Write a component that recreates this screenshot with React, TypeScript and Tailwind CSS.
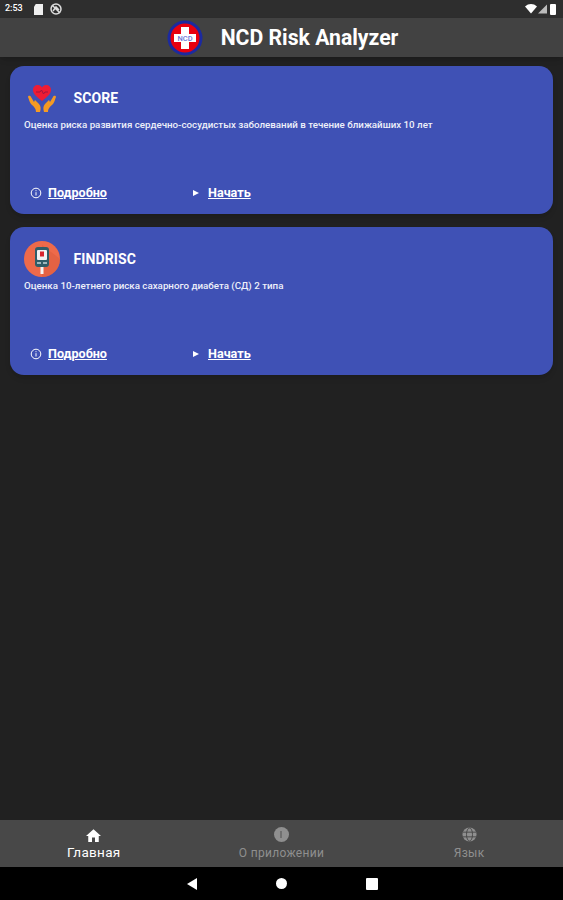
const font = "font-['Roboto',sans-serif]";

function LogoIcon() {
  return (
    <svg viewBox="0 0 36 36" className="w-[36px] h-[36px]">
      <circle cx="18" cy="18" r="16" fill="#e8000f" stroke="#1c2aa0" strokeWidth="3" />
      <path d="M14 7h8v7h7v8h-7v7h-8v-7H7v-8h7z" fill="#fff" />
      <text x="18" y="20.500" textAnchor="middle" fontSize="7.500" fontWeight="500" fill="#6a78d8" fontFamily="Roboto">
        NCD
      </text>
    </svg>
  );
}

function HeartHands() {
  return (
    <svg viewBox="0 0 30 30" className="w-[30px] h-[30px]">
      <path d="M15 18C10 14 6 11 6 7c0-3 2-5 5-5 2 0 3 1 4 2.500C16 3 17 2 19 2c3 0 5 2 5 5 0 4-4 7-9 11z" fill="#ee1c34" />
      <path d="M9 9h4l1.500-2 2 4 1.500-2h3" fill="none" stroke="#a01540" strokeWidth="1" />
      <path d="M1 14c1 2 1 4 3 7 2 2 5 4 5 8h4c1-3 1-6-1-8l-4-4-1 2-3-5c-1-2-3-1-3 0z" fill="#f59a23" />
      <path d="M29 14c-1 2-1 4-3 7-2 2-5 4-5 8h-4c-1-3-1-6 1-8l4-4 1 2 3-5c1-2 3-1 3 0z" fill="#f59a23" />
    </svg>
  );
}

function Glucometer() {
  return (
    <svg viewBox="0 0 36 36" className="w-[36px] h-[36px]">
      <circle cx="18" cy="18" r="18" fill="#ee6a4a" />
      <path d="M18 4L36 18A18 18 0 0 1 18 36z" fill="#d95a3c" opacity="0.5" />
      <rect x="11" y="6" width="14" height="20" rx="3" fill="#2f5d68" />
      <rect x="13" y="9" width="10" height="10" rx="1" fill="#f2f2f2" />
      <rect x="16" y="10.500" width="4" height="5" fill="#d8242c" />
      <rect x="13" y="21" width="4" height="2" fill="#9fb8bd" />
      <rect x="19" y="21" width="4" height="2" fill="#9fb8bd" />
      <rect x="16.500" y="26" width="3" height="7" fill="#f4f4f4" />
    </svg>
  );
}

function InfoMark() {
  return (
    <svg viewBox="0 0 12 12" className="w-[12px] h-[12px]" fill="none" stroke="#fff" strokeWidth="1">
      <circle cx="6" cy="6" r="4.800" />
      <path d="M6 5.200v3.300M6 3.200v1" />
    </svg>
  );
}

function Card({ icon, title, text }: { icon: React.ReactNode; title: string; text: string }) {
  return (
    <div className="h-[148px] rounded-[14px] bg-[#3f51b5] flex flex-col pl-[14px] pt-[14px] text-white shadow-md">
      <div className="flex items-center h-[36px]">
        <div className="w-[36px] h-[36px] flex items-center justify-center">{icon}</div>
        <span className="ml-[13.500px] text-[14px] leading-none font-bold tracking-[0.1px]">{title}</span>
      </div>
      <p className="text-[9.75px] leading-[12px] font-medium mt-[3px] text-[#eef0fa]">{text}</p>
      <div className="mt-auto mb-[14.500px] flex items-center text-[12.6px] font-bold leading-none">
        <div className="flex items-center w-[169px] pl-[6px]">
          <InfoMark />
          <span className="ml-[6px] underline">Подробно</span>
        </div>
        <div className="w-0 h-0 border-y-[3.5px] border-y-transparent border-l-[6px] border-l-white" />
        <span className="ml-[9px] underline">Начать</span>
      </div>
    </div>
  );
}

function Tab({ icon, label, active }: { icon: React.ReactNode; label: string; active?: boolean }) {
  return (
    <div className={`flex flex-col items-center ${active ? "text-white" : "text-[#8f8f8f]"}`}>
      <div className="h-[16px] flex items-center justify-center">{icon}</div>
      <span className={`leading-[16px] ${active ? "mt-[1px] text-[13.5px]" : "mt-[2px] text-[12px]"} tracking-[0.3px]`}>{label}</span>
    </div>
  );
}

export default function App() {
  return (
    <div className={`${font} w-[563px] h-[900px] flex flex-col bg-[#212121] overflow-hidden`}>
      {/* статус-бар */}
      <div className="h-[18px] bg-[#2e2e2e] flex items-center pl-[5px] pr-[6px] text-white shrink-0">
        <span className="text-[9px] font-medium w-[23px]">2:53</span>
        <svg viewBox="0 0 10 12" className="w-[9px] h-[11px] ml-[6px]" fill="#eee">
          <path d="M2 0h8v12H0V3z" />
        </svg>
        <svg viewBox="0 0 12 12" className="w-[12px] h-[12px] ml-[7px]" fill="none" stroke="#ddd" strokeWidth="1.500">
          <circle cx="6" cy="6" r="5" />
          <path d="M2 2l8 8M3 8l3-4 3 3" />
        </svg>
        <div className="ml-auto flex items-center gap-[1px]">
          <svg viewBox="0 0 12 10" className="w-[12px] h-[10px]" fill="#fff">
            <path d="M0 2.500C3.500-.8 8.500-.8 12 2.500L6 9.500z" />
          </svg>
          <svg viewBox="0 0 10 10" className="w-[9px] h-[10px]" fill="#bbb">
            <path d="M10 0v10H0z" />
          </svg>
          <div className="w-[6px] h-[11px] bg-white rounded-[1px] ml-[2px] mr-[1px]" />
        </div>
      </div>

      {/* шапка */}
      <div className="h-[39px] bg-[#424242] flex items-center justify-center pl-[2px] shrink-0 shadow-md">
        <div className="flex items-center">
          <LogoIcon />
          <span className="ml-[18px] text-[21.2px] font-bold text-white leading-none">NCD Risk Analyzer</span>
        </div>
      </div>

      <main className="flex-1 flex flex-col gap-[13px] pt-[9px] px-[10px]">
        <Card
          icon={<HeartHands />}
          title="SCORE"
          text="Оценка риска развития сердечно-сосудистых заболеваний в течение ближайших 10 лет"
        />
        <Card
          icon={<Glucometer />}
          title="FINDRISC"
          text="Оценка 10-летнего риска сахарного диабета (СД) 2 типа"
        />
      </main>

      {/* нижнее меню */}
      <div className="h-[47px] bg-[#484848] grid grid-cols-3 items-center shrink-0">
        <div className="flex justify-center">
          <Tab
            active
            label="Главная"
            icon={
              <svg viewBox="2 3 20 17" className="w-[15px] h-[13px]" fill="#fff">
                <path d="M10 20v-6h4v6h5v-8h3L12 3 2 12h3v8z" />
              </svg>
            }
          />
        </div>
        <div className="flex justify-center">
          <Tab
            label="О приложении"
            icon={
              <div className="w-[15px] h-[15px] rounded-full bg-[#8f8f8f] flex items-center justify-center">
                <div className="w-[2px] h-[7px] bg-[#6f6f6f]" />
              </div>
            }
          />
        </div>
        <div className="flex justify-center">
          <Tab
            label="Язык"
            icon={
              <svg viewBox="0 0 16 16" className="w-[15px] h-[15px]" fill="#8f8f8f" stroke="#484848" strokeWidth="1">
                <circle cx="8" cy="8" r="7.500" stroke="none" />
                <ellipse cx="8" cy="8" rx="3.200" ry="7" fill="none" />
                <path d="M1 5.500h14M1 10.500h14" fill="none" />
              </svg>
            }
          />
        </div>
      </div>

      {/* системная навигация */}
      <div className="h-[33px] bg-black flex items-center justify-center pl-[1px] shrink-0">
        <div className="w-0 h-0 border-y-[6px] border-y-transparent border-r-[10px] border-r-white" />
        <div className="w-[11px] h-[11px] rounded-full bg-white ml-[79px]" />
        <div className="w-[12px] h-[12px] bg-white rounded-[1px] ml-[79px]" />
      </div>
    </div>
  );
}
